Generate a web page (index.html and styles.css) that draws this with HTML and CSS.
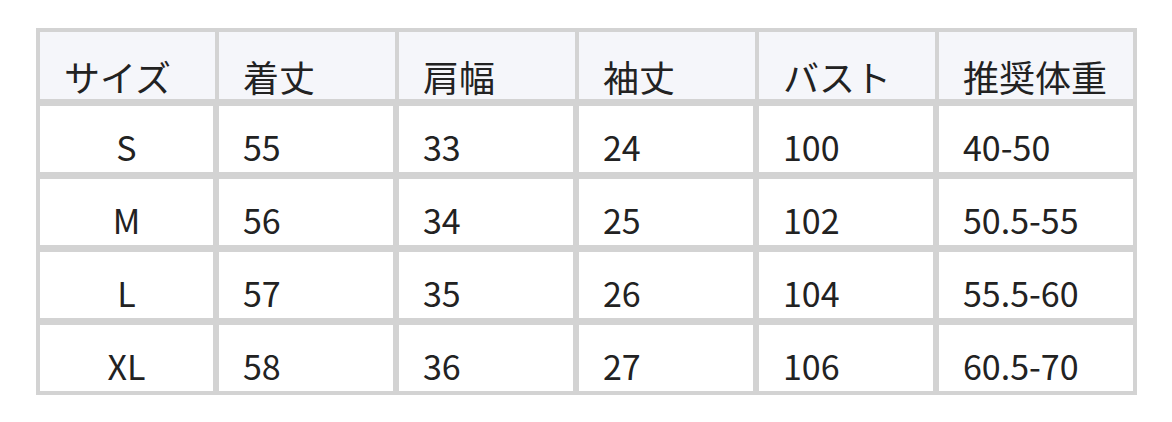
FILE: index.html
```
<!DOCTYPE html>
<html lang="ja">
<head>
<meta charset="utf-8">
<link rel="stylesheet" href="styles.css">
</head>
<body>
<div class="size-table">
  <div class="cell head">サイズ</div>
  <div class="cell head">着丈</div>
  <div class="cell head">肩幅</div>
  <div class="cell head">袖丈</div>
  <div class="cell head">バスト</div>
  <div class="cell head last-col">推奨体重</div>

  <div class="cell body center">S</div>
  <div class="cell body">55</div>
  <div class="cell body">33</div>
  <div class="cell body">24</div>
  <div class="cell body">100</div>
  <div class="cell body last-col">40-50</div>

  <div class="cell body center">M</div>
  <div class="cell body">56</div>
  <div class="cell body">34</div>
  <div class="cell body">25</div>
  <div class="cell body">102</div>
  <div class="cell body last-col">50.5-55</div>

  <div class="cell body center">L</div>
  <div class="cell body">57</div>
  <div class="cell body">35</div>
  <div class="cell body">26</div>
  <div class="cell body">104</div>
  <div class="cell body last-col">55.5-60</div>

  <div class="cell body center last-row">XL</div>
  <div class="cell body last-row">58</div>
  <div class="cell body last-row">36</div>
  <div class="cell body last-row">27</div>
  <div class="cell body last-row">106</div>
  <div class="cell body last-row last-col">60.5-70</div>
</div>
</body>
</html>
```
FILE: styles.css
```
html, body {
  margin: 0;
  padding: 0;
  background: #ffffff;
}
body {
  padding: 28px 0 0 36px;
  font-family: "Noto Sans CJK JP", "Noto Sans", sans-serif;
  color: #222222;
}
.size-table {
  display: grid;
  grid-template-columns: 179px 180px 180px 180px 180px 194px;
  grid-template-rows: 74px 73px 73px 73px 66px;
  width: 1093px;
  border: 4px solid #d3d3d3;
}
.cell {
  box-sizing: border-box;
  line-height: 1;
  white-space: nowrap;
}
.head {
  background: #f5f6fa;
  border-right: 4px solid #d3d3d3;
  border-bottom: 7px solid #d3d3d3;
  font-size: 36px;
  padding: 26px 0 0 24px;
}
.body {
  background: #ffffff;
  border-right: 6px solid #d3d3d3;
  border-bottom: 7px solid #d3d3d3;
  font-size: 34px;
  padding: 24px 0 0 24px;
}
.center {
  padding-left: 0;
  text-align: center;
}
.last-col {
  border-right: none;
}
.last-row {
  border-bottom: none;
}
```
